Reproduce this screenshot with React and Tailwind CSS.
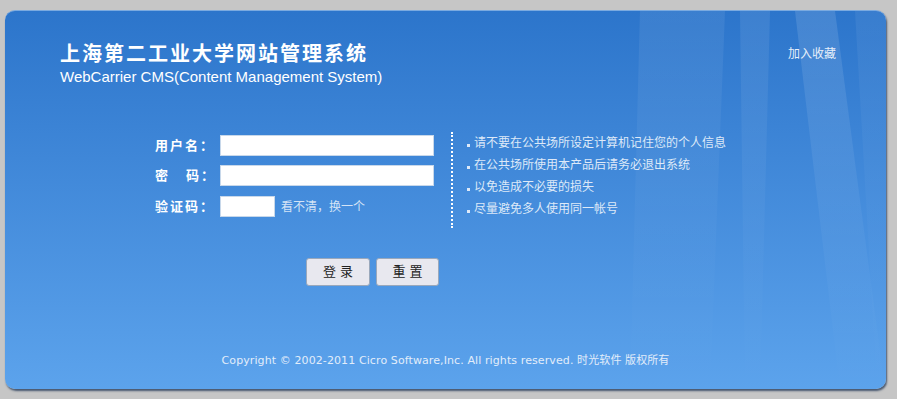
import React from "react";

const tips = [
  "请不要在公共场所设定计算机记住您的个人信息",
  "在公共场所使用本产品后请务必退出系统",
  "以免造成不必要的损失",
  "尽量避免多人使用同一帐号",
];

const cjk = { fontFamily: '"Liberation Sans", "Noto Sans CJK SC", sans-serif' };

function Beams() {
  // faint light streaks on the right side of the panel
  return (
    <svg className="absolute inset-0 w-full h-full pointer-events-none" viewBox="0 0 881 379" preserveAspectRatio="none">
      <defs>
        <linearGradient id="fade" x1="0" y1="0" x2="0" y2="1">
          <stop offset="0" stopColor="#ffffff" stopOpacity="0.12" />
          <stop offset="0.6" stopColor="#ffffff" stopOpacity="0.04" />
          <stop offset="1" stopColor="#ffffff" stopOpacity="0" />
        </linearGradient>
      </defs>
      <polygon points="635,0 720,0 705,379 625,379" fill="url(#fade)" opacity="0.6" />
      <polygon points="735,0 765,0 755,379 740,379" fill="url(#fade)" opacity="0.7" />
      <polygon points="790,0 830,0 880,379 835,379" fill="url(#fade)" />
      <polygon points="850,0 881,0 881,379 872,379" fill="url(#fade)" opacity="0.5" />
    </svg>
  );
}

export default function App() {
  return (
    <div className="w-[897px] h-[399px] bg-[#c6c6c6] pt-[10px] pl-[5px]" style={cjk}>
      <div className="relative w-[881px] h-[379px] rounded-[10px] bg-gradient-to-b from-[#2c75cb] to-[#5ca3ec] shadow-[1px_2px_2px_rgba(40,60,90,0.8)] border-t border-[#7aaae0] overflow-hidden">
        <Beams />
        <div className="relative flex flex-col h-full">
          {/* Header */}
          <div className="flex justify-between pl-[55px] pr-[50px] pt-[32px]">
            <div>
              <h1 className="text-[20px] leading-[22px] font-bold text-white tracking-[2px]">
                上海第二工业大学网站管理系统
              </h1>
              <p className="text-[15px] leading-[18px] text-white mt-[3px]">
                WebCarrier CMS(Content Management System)
              </p>
            </div>
            <a className="text-[12px] text-[#e6effa] mt-[2px]">加入收藏</a>
          </div>

          {/* Form */}
          <div className="flex pl-[150px] mt-[49px]">
            <div className="flex flex-col gap-[9px] w-[296px] pr-[16px]">
              <div className="flex items-center h-[21px]">
                <span className="w-[65px] text-[13px] font-bold text-white tracking-[2px]">用户名：</span>
                <input className="w-[214px] h-[21px] bg-white border border-[#c8d8ea] outline-none" />
              </div>
              <div className="flex items-center h-[21px]">
                <span className="w-[65px] text-[13px] font-bold text-white tracking-[2px]">
                  密<span className="inline-block w-[16px]" />码：
                </span>
                <input type="password" className="w-[214px] h-[21px] bg-white border border-[#c8d8ea] outline-none" />
              </div>
              <div className="flex items-center h-[21px] mt-[1px]">
                <span className="w-[65px] text-[13px] font-bold text-white tracking-[2px]">验证码：</span>
                <input className="w-[55px] h-[21px] bg-white border border-[#c8d8ea] outline-none" />
                <span className="ml-[6px] text-[12px] text-[#d3e3f6]">看不清，换一个</span>
              </div>
            </div>
            <div className="border-l-2 border-dotted border-white h-[96px] -mt-[3px]" />
            <ul className="pl-[14px] flex flex-col gap-[6px] mt-[0px]">
              {tips.map((t) => (
                <li key={t} className="flex items-center text-[12px] leading-[16px] text-[#dde9f8]">
                  <span className="w-[3px] h-[3px] bg-[#dde9f8] mr-[4px] mt-[4px]" />
                  {t}
                </li>
              ))}
            </ul>
          </div>

          {/* Buttons */}
          <div className="flex gap-[6px] pl-[301px] mt-[30px]">
            <button className="w-[64px] h-[28px] rounded-[3px] bg-[#e8e8ef] border border-[#9aa8bb] text-[13px] text-[#222] tracking-[4px] pl-[4px]">
              登录
            </button>
            <button className="w-[63px] h-[28px] rounded-[3px] bg-[#e8e8ef] border border-[#9aa8bb] text-[13px] text-[#222] tracking-[4px] pl-[4px]">
              重置
            </button>
          </div>

          {/* Footer */}
          <div className="mt-auto mb-[20px] text-center text-[11px] tracking-[0.1px] text-[#e2edfa]" style={{ fontFamily: '"DejaVu Sans", "Noto Sans CJK SC", sans-serif' }}>
            Copyright © 2002-2011 Cicro Software,Inc. All rights reserved. 时光软件 版权所有
          </div>
        </div>
      </div>
    </div>
  );
}
